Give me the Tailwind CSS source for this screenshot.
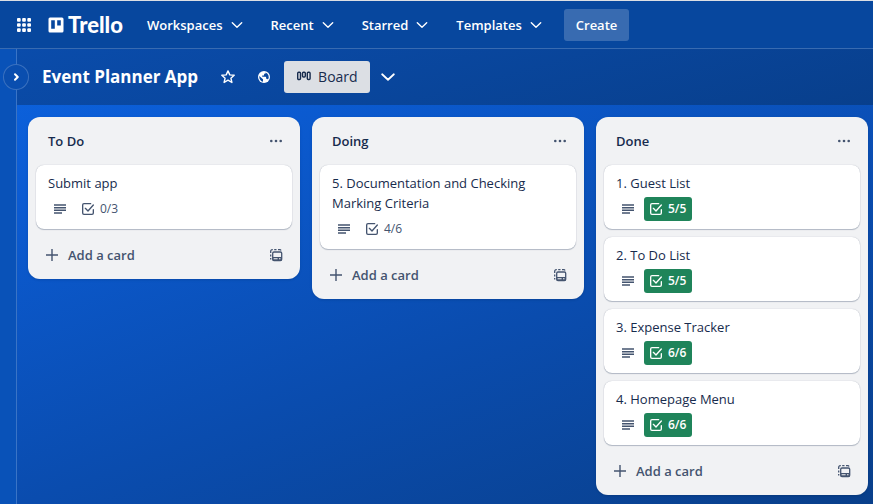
<!DOCTYPE html>
<html lang="en">
<head>
<meta charset="utf-8">
<meta name="viewport" content="width=device-width, initial-scale=1">
<title>Event Planner App | Trello</title>
<script src="https://cdn.jsdelivr.net/npm/@tailwindcss/browser@4"></script>
</head>
<body class="flex min-h-screen flex-col border-t border-[#dcdfe4] bg-[linear-gradient(160deg,#0c66e4_0%,#0b5bd2_25%,#0a4cae_62%,#093f8a_100%)] font-['Open_Sans','Noto_Sans',sans-serif] text-[13px] leading-5 text-[#172b4d]">
<svg class="hidden" aria-hidden="true">
  <symbol id="chevron" viewBox="0 0 16 16"><path d="M3.300 5.800 8 10.200l4.700-4.400" fill="none" stroke="currentColor" stroke-width="1.400" stroke-linecap="round" stroke-linejoin="round"/></symbol>
  <symbol id="dots" viewBox="0 0 16 16"><g fill="currentColor"><circle cx="3.300" cy="8" r="1.300"/><circle cx="8" cy="8" r="1.300"/><circle cx="12.700" cy="8" r="1.300"/></g></symbol>
  <symbol id="lines" viewBox="0 0 16 16"><path d="M2 4h12M2 6.700h12M2 9.300h12M2 12h8" fill="none" stroke="currentColor" stroke-width="1.400"/></symbol>
  <symbol id="check" viewBox="0 0 24 24"><g fill="none" stroke="currentColor" stroke-width="2" stroke-linecap="round" stroke-linejoin="round"><path d="M16 4H6a2 2 0 0 0-2 2v12a2 2 0 0 0 2 2h12a2 2 0 0 0 2-2v-5"/><path d="m8 11 4 4 8-9"/></g></symbol>
  <symbol id="plus" viewBox="0 0 16 16"><path d="M8 2v12M2 8h12" fill="none" stroke="currentColor" stroke-width="1.400"/></symbol>
  <symbol id="template" viewBox="0 0 16 16"><g fill="none" stroke="currentColor" stroke-width="1.300"><path d="M2.700 12.500V11M2.700 9.500v-2M2.700 6V4.200a1.500 1.500 0 0 1 1.500-1.500h.6M6.200 2.700h2.300M10 2.700h1.800q.9 0 1.200.8"/><rect x="4.700" y="5" width="9" height="8.500" rx="1.300"/></g><path fill="currentColor" d="M4.700 10h9v3.500h-9z"/><path fill="#f1f2f4" d="M5.600 11.300h4v1h-4zM11 11.300h1.500v1H11z"/></symbol>
</svg>

<header class="flex h-12 shrink-0 items-center border-b border-white/20 bg-[#07479e] pl-4 text-white">
  <button type="button" aria-label="Switch apps" class="mr-4">
    <svg class="size-4" viewBox="0 0 16 16" fill="currentColor"><rect x="1" y="1" width="3.700" height="3.700" rx="1"/><rect x="6.150" y="1" width="3.700" height="3.700" rx="1"/><rect x="11.300" y="1" width="3.700" height="3.700" rx="1"/><rect x="1" y="6.150" width="3.700" height="3.700" rx="1"/><rect x="6.150" y="6.150" width="3.700" height="3.700" rx="1"/><rect x="11.300" y="6.150" width="3.700" height="3.700" rx="1"/><rect x="1" y="11.300" width="3.700" height="3.700" rx="1"/><rect x="6.150" y="11.300" width="3.700" height="3.700" rx="1"/><rect x="11.300" y="11.300" width="3.700" height="3.700" rx="1"/></svg>
  </button>
  <a href="#" class="flex w-[89px] items-center gap-1 font-['Lato',sans-serif] text-[22px] font-black">
    <svg class="size-4" viewBox="0 0 16 16" aria-hidden="true"><path fill="currentColor" fill-rule="evenodd" d="M2 .5h12A1.500 1.500 0 0 1 15.500 2v12a1.500 1.500 0 0 1-1.500 1.500H2A1.500 1.500 0 0 1 .5 14V2A1.500 1.500 0 0 1 2 .5Zm1.200 2.700v8.600h3.600V3.200H3.200Zm6 0v5.200h3.600V3.200H9.200Z"/></svg>
    Trello
  </a>
  <nav class="flex items-center gap-1.5 font-semibold">
    <button type="button" class="flex items-center gap-1.5 px-2.5">Workspaces<svg class="size-4"><use href="#chevron"/></svg></button>
    <button type="button" class="flex items-center gap-1.5 px-2.5">Recent<svg class="size-4"><use href="#chevron"/></svg></button>
    <button type="button" class="flex items-center gap-1.5 px-2.5">Starred<svg class="size-4"><use href="#chevron"/></svg></button>
    <button type="button" class="flex items-center gap-1.5 px-2.5">Templates<svg class="size-4"><use href="#chevron"/></svg></button>
    <button type="button" class="ml-1 h-8 rounded-[3px] bg-white/20 px-3">Create</button>
  </nav>
</header>

<div class="flex grow">
  <aside class="relative w-[17px] shrink-0 border-r border-white/20 bg-[#0952b8]">
    <button type="button" aria-label="Expand sidebar" class="absolute top-[15px] left-[3px] grid size-[26px] place-items-center rounded-full border border-white/20 bg-[#0a4eaf] text-white">
      <svg class="size-4" viewBox="0 0 16 16"><path d="m7 5.200 2.800 2.800L7 10.800" fill="none" stroke="currentColor" stroke-width="2" stroke-linecap="round" stroke-linejoin="round"/></svg>
    </button>
  </aside>
  <main class="min-w-0 grow">
    <div class="flex h-14 items-center bg-[linear-gradient(165deg,#0a4cab,#083f8c)] pl-[25px] text-white">
      <h1 class="text-[17px] font-bold">Event Planner App</h1>
      <button type="button" aria-label="Star board" class="ml-[22px]">
        <svg class="size-4" viewBox="0 0 16 16"><path d="m8 1.900 1.800 4 4.400.4-3.300 2.900 1 4.300L8 11.200l-3.900 2.300 1-4.300-3.300-2.900 4.400-.4Z" fill="none" stroke="currentColor" stroke-width="1.400" stroke-linejoin="round"/></svg>
      </button>
      <button type="button" aria-label="Change visibility" class="ml-5">
        <svg class="size-4" viewBox="0 0 16 16"><circle cx="8" cy="8" r="6" fill="currentColor"/><path fill="#09489f" d="M3.300 7 7 10.300v2.400C4.800 12.300 3.300 10.400 3.300 8V7ZM9.600 3.500a4.700 4.700 0 0 1 2.300 7.100c-.2-.5-.6-.8-1.200-.8h-.6V8.300c0-.4-.2-.6-.6-.6H6.200V6.500h1.300c.4 0 .6-.2.6-.6V4.800h.8c.5 0 .8-.4.700-1.300Z"/></svg>
      </button>
      <button type="button" class="ml-3 flex h-8 items-center gap-1.5 rounded-[3px] bg-[#dcdfe4] px-3 text-sm text-[#172b4d]">
        <svg class="size-4" viewBox="0 0 16 16" fill="none" stroke="currentColor" stroke-width="1.400"><rect x="1.700" y="3.200" width="2.800" height="7.300" rx="1"/><rect x="6.500" y="3.200" width="2.800" height="4.800" rx="1"/><rect x="11.300" y="3.200" width="2.800" height="7.300" rx="1"/></svg>
        Board
      </button>
      <button type="button" aria-label="More views" class="ml-2">
        <svg class="size-5"><use href="#chevron"/></svg>
      </button>
    </div>

    <div class="flex items-start gap-3 px-[11px] py-3">
      <section class="w-[272px] shrink-0 rounded-xl bg-[#f1f2f4] px-2 pb-2 shadow-sm">
        <header class="flex h-12 items-center justify-between pr-2 pl-3">
          <h2 class="font-semibold">To Do</h2>
          <button type="button" aria-label="List actions" class="text-[#44546f]"><svg class="size-4"><use href="#dots"/></svg></button>
        </header>
        <ul class="flex flex-col gap-2">
          <li class="rounded-lg bg-white px-3 py-2 shadow-[0_1px_1px_#091e4240,0_0_1px_#091e424f]">
            <p>Submit app</p>
            <div class="mt-1 flex gap-1 text-xs text-[#44546f]">
              <span class="grid size-6 place-items-center"><svg class="size-4"><use href="#lines"/></svg></span>
              <span class="flex h-6 items-center gap-1 pr-1.5 pl-1"><svg class="size-4"><use href="#check"/></svg>0/3</span>
            </div>
          </li>
        </ul>
        <footer class="mt-2.5 flex h-8 items-center justify-between px-2 text-[#44546f]">
          <button type="button" class="flex items-center gap-2 font-semibold"><svg class="size-4"><use href="#plus"/></svg>Add a card</button>
          <button type="button" aria-label="Create from template"><svg class="size-4"><use href="#template"/></svg></button>
        </footer>
      </section>

      <section class="w-[272px] shrink-0 rounded-xl bg-[#f1f2f4] px-2 pb-2 shadow-sm">
        <header class="flex h-12 items-center justify-between pr-2 pl-3">
          <h2 class="font-semibold">Doing</h2>
          <button type="button" aria-label="List actions" class="text-[#44546f]"><svg class="size-4"><use href="#dots"/></svg></button>
        </header>
        <ul class="flex flex-col gap-2">
          <li class="rounded-lg bg-white px-3 py-2 shadow-[0_1px_1px_#091e4240,0_0_1px_#091e424f]">
            <p>5. Documentation and Checking<br>Marking Criteria</p>
            <div class="mt-1 flex gap-1 text-xs text-[#44546f]">
              <span class="grid size-6 place-items-center"><svg class="size-4"><use href="#lines"/></svg></span>
              <span class="flex h-6 items-center gap-1 pr-1.5 pl-1"><svg class="size-4"><use href="#check"/></svg>4/6</span>
            </div>
          </li>
        </ul>
        <footer class="mt-2.5 flex h-8 items-center justify-between px-2 text-[#44546f]">
          <button type="button" class="flex items-center gap-2 font-semibold"><svg class="size-4"><use href="#plus"/></svg>Add a card</button>
          <button type="button" aria-label="Create from template"><svg class="size-4"><use href="#template"/></svg></button>
        </footer>
      </section>

      <section class="w-[272px] shrink-0 rounded-xl bg-[#f1f2f4] px-2 pb-2 shadow-sm">
        <header class="flex h-12 items-center justify-between pr-2 pl-3">
          <h2 class="font-semibold">Done</h2>
          <button type="button" aria-label="List actions" class="text-[#44546f]"><svg class="size-4"><use href="#dots"/></svg></button>
        </header>
        <ul class="flex flex-col gap-2">
          <li class="rounded-lg bg-white px-3 py-2 shadow-[0_1px_1px_#091e4240,0_0_1px_#091e424f]">
            <p>1. Guest List</p>
            <div class="mt-1 flex gap-1 text-xs text-[#44546f]">
              <span class="grid size-6 place-items-center"><svg class="size-4"><use href="#lines"/></svg></span>
              <span class="flex h-6 items-center gap-1 rounded-[3px] bg-[#1f845a] pr-1.5 pl-1 font-semibold text-white"><svg class="size-4"><use href="#check"/></svg>5/5</span>
            </div>
          </li>
          <li class="rounded-lg bg-white px-3 py-2 shadow-[0_1px_1px_#091e4240,0_0_1px_#091e424f]">
            <p>2. To Do List</p>
            <div class="mt-1 flex gap-1 text-xs text-[#44546f]">
              <span class="grid size-6 place-items-center"><svg class="size-4"><use href="#lines"/></svg></span>
              <span class="flex h-6 items-center gap-1 rounded-[3px] bg-[#1f845a] pr-1.5 pl-1 font-semibold text-white"><svg class="size-4"><use href="#check"/></svg>5/5</span>
            </div>
          </li>
          <li class="rounded-lg bg-white px-3 py-2 shadow-[0_1px_1px_#091e4240,0_0_1px_#091e424f]">
            <p>3. Expense Tracker</p>
            <div class="mt-1 flex gap-1 text-xs text-[#44546f]">
              <span class="grid size-6 place-items-center"><svg class="size-4"><use href="#lines"/></svg></span>
              <span class="flex h-6 items-center gap-1 rounded-[3px] bg-[#1f845a] pr-1.5 pl-1 font-semibold text-white"><svg class="size-4"><use href="#check"/></svg>6/6</span>
            </div>
          </li>
          <li class="rounded-lg bg-white px-3 py-2 shadow-[0_1px_1px_#091e4240,0_0_1px_#091e424f]">
            <p>4. Homepage Menu</p>
            <div class="mt-1 flex gap-1 text-xs text-[#44546f]">
              <span class="grid size-6 place-items-center"><svg class="size-4"><use href="#lines"/></svg></span>
              <span class="flex h-6 items-center gap-1 rounded-[3px] bg-[#1f845a] pr-1.5 pl-1 font-semibold text-white"><svg class="size-4"><use href="#check"/></svg>6/6</span>
            </div>
          </li>
        </ul>
        <footer class="mt-2.5 flex h-8 items-center justify-between px-2 text-[#44546f]">
          <button type="button" class="flex items-center gap-2 font-semibold"><svg class="size-4"><use href="#plus"/></svg>Add a card</button>
          <button type="button" aria-label="Create from template"><svg class="size-4"><use href="#template"/></svg></button>
        </footer>
      </section>
    </div>
  </main>
</div>
</body>
</html>
